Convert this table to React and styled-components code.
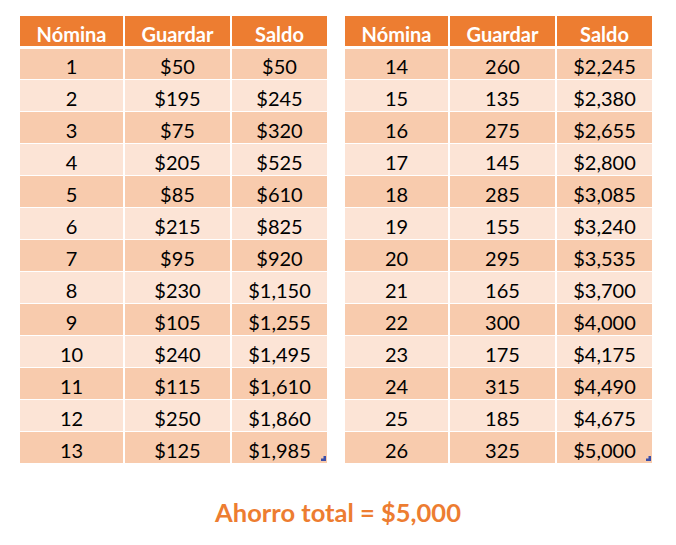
import React from 'react';
import styled, { createGlobalStyle } from 'styled-components';

const left = [
  ['1', '$50', '$50'],
  ['2', '$195', '$245'],
  ['3', '$75', '$320'],
  ['4', '$205', '$525'],
  ['5', '$85', '$610'],
  ['6', '$215', '$825'],
  ['7', '$95', '$920'],
  ['8', '$230', '$1,150'],
  ['9', '$105', '$1,255'],
  ['10', '$240', '$1,495'],
  ['11', '$115', '$1,610'],
  ['12', '$250', '$1,860'],
  ['13', '$125', '$1,985'],
];

const right = [
  ['14', '260', '$2,245'],
  ['15', '135', '$2,380'],
  ['16', '275', '$2,655'],
  ['17', '145', '$2,800'],
  ['18', '285', '$3,085'],
  ['19', '155', '$3,240'],
  ['20', '295', '$3,535'],
  ['21', '165', '$3,700'],
  ['22', '300', '$4,000'],
  ['23', '175', '$4,175'],
  ['24', '315', '$4,490'],
  ['25', '185', '$4,675'],
  ['26', '325', '$5,000'],
];

const SavingsTable = ({ rows }) => (
  <TableBox>
    <Grid>
      <Head>Nómina</Head>
      <Head>Guardar</Head>
      <Head>Saldo</Head>
      {rows.map((r, i) =>
        r.map((v, j) => (
          <Cell key={i + '-' + j} $dark={i % 2 === 0}>
            {v}
          </Cell>
        ))
      )}
    </Grid>
    <Handle />
  </TableBox>
);

const App = () => {
  return (
    <>
      <GlobalStyle />
      <Page>
        <Tables>
          <SavingsTable rows={left} />
          <SavingsTable rows={right} />
        </Tables>
        <Total>Ahorro total = $5,000</Total>
      </Page>
    </>
  );
};

export default App;

const GlobalStyle = createGlobalStyle`
  body {
    margin: 0;
    background: #ffffff;
    font-family: Lato, "Open Sans", sans-serif;
  }
`;

const Page = styled.div`
  width: 676px;
  height: 545px;
  padding: 16px 0 0 20px;
  box-sizing: border-box;
`;

const Tables = styled.div`
  display: flex;
  gap: 18px;
`;

const TableBox = styled.div`
  position: relative;
`;

const Grid = styled.div`
  display: grid;
  grid-template-columns: 103px 105px 95px;
  grid-auto-rows: 31px;
  column-gap: 2px;
  row-gap: 1px;
`;

const Head = styled.div`
  background: #ed7d31;
  color: #ffffff;
  font-weight: 700;
  font-size: 20px;
  display: flex;
  align-items: center;
  justify-content: center;
  margin-bottom: 1px;
  padding-top: 5px;
  box-sizing: border-box;
`;

const Cell = styled.div`
  background: ${(p) => (p.$dark ? '#f8cbad' : '#fce4d6')};
  color: #000000;
  font-size: 20px;
  display: flex;
  align-items: center;
  justify-content: center;
  padding-top: 4px;
  box-sizing: border-box;
  &:nth-child(-n + 6) {
    margin-top: 1px;
  }
`;

const Handle = styled.div`
  position: absolute;
  right: 1px;
  bottom: 2px;
  width: 5px;
  height: 5px;
  background: #3b4ea8;
  clip-path: polygon(100% 0, 100% 100%, 0 100%, 0 50%, 50% 50%, 50% 0);
`;

const Total = styled.div`
  margin-top: 34px;
  margin-left: -20px;
  text-align: center;
  color: #ed7d31;
  font-weight: 700;
  font-size: 25.5px;
`;
